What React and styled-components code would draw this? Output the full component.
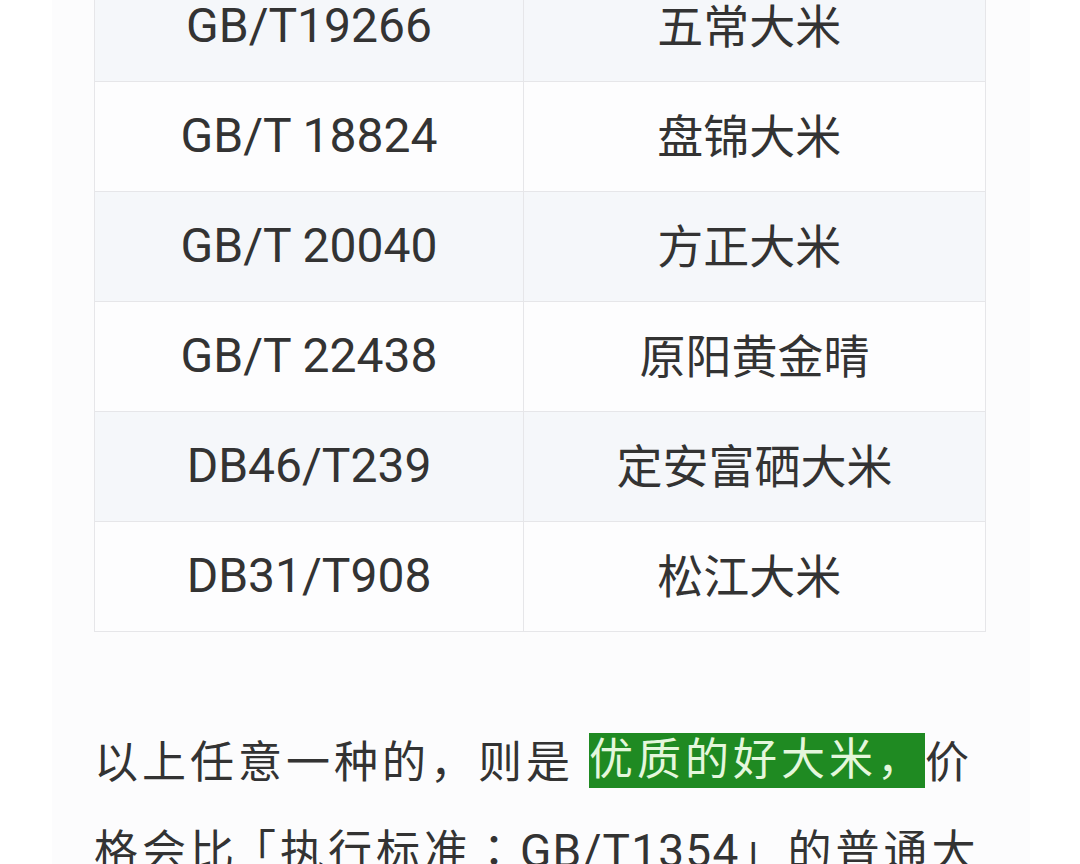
import styled, { createGlobalStyle } from "styled-components";

const GlobalStyle = createGlobalStyle`
  html, body {
    margin: 0;
    padding: 0;
    background: #ffffff;
  }
  body {
    font-family: Roboto, "Noto Sans CJK SC", sans-serif;
    color: #333333;
    overflow: hidden;
  }
`;

const Page = styled.div`
  width: 1080px;
  height: 864px;
  overflow: hidden;
  display: flex;
  background: #ffffff;
`;

const Article = styled.main`
  margin-left: 52px;
  width: 978px;
  background: #fcfcfd;
  padding: 0 45px 0 42px;
  box-sizing: border-box;
  display: flex;
  flex-direction: column;
`;

/* scrolled view: first row is cut at the top */
const Table = styled.table`
  margin-top: -29px;
  width: 892px;
  border-collapse: collapse;
  table-layout: fixed;
  color: #333333;
`;

const Row = styled.tr`
  height: 110px;
  background: ${(p) => (p.$striped ? "#f5f7fa" : "#fdfdfe")};
`;

const Cell = styled.td`
  border: 1px solid #e6e6e9;
  text-align: center;
  vertical-align: middle;
  padding: 0;
  white-space: pre;
  line-height: 1;
`;

const CodeCell = styled(Cell)`
  width: 428px;
  font-family: Roboto, sans-serif;
  font-size: 48px;
  padding-bottom: 2px;
`;

const NameCell = styled(Cell)`
  font-family: "Noto Sans CJK SC", sans-serif;
  font-size: 46px;
  padding-bottom: 8px;
`;

const Paragraph = styled.p`
  margin: 89px 0 0 0;
  font-size: 44px;
  line-height: 85px;
  letter-spacing: 4px;
  color: #333333;
  white-space: nowrap;
`;

const Mark = styled.span`
  display: inline-block;
  height: 55px;
  line-height: 55px;
  background: #1f8a22;
  color: #e4f7dc;
  vertical-align: 3px;
`;

const Latin = styled.span`
  font-family: Roboto, sans-serif;
  font-size: 46px;
  letter-spacing: 1.2px;
`;

const Colon = styled.span`
  font-family: "Noto Sans CJK JP", sans-serif;
`;

const Bracket = styled.span`
  margin-left: -6px;
`;

const rows = [
  ["GB/T19266", "五常大米 "],
  ["GB/T 18824", "盘锦大米 "],
  ["GB/T 20040", "方正大米 "],
  ["GB/T 22438", "原阳黄金晴"],
  ["DB46/T239", "定安富硒大米"],
  ["DB31/T908", "松江大米 "],
];

export default function App() {
  return (
    <>
      <GlobalStyle />
      <Page>
        <Article>
          <Table>
            <tbody>
              {rows.map(([code, name], i) => (
                <Row key={code} $striped={i % 2 === 0}>
                  <CodeCell>{code}</CodeCell>
                  <NameCell>{name}</NameCell>
                </Row>
              ))}
            </tbody>
          </Table>
          <Paragraph>
            以上任意一种的，则是 <Mark>优质的好大米，</Mark>价
            <br />
            格会比<Bracket>「</Bracket>执行标准<Colon>：</Colon>
            <Latin>GB/T1354</Latin>」的普通大
          </Paragraph>
        </Article>
      </Page>
    </>
  );
}
